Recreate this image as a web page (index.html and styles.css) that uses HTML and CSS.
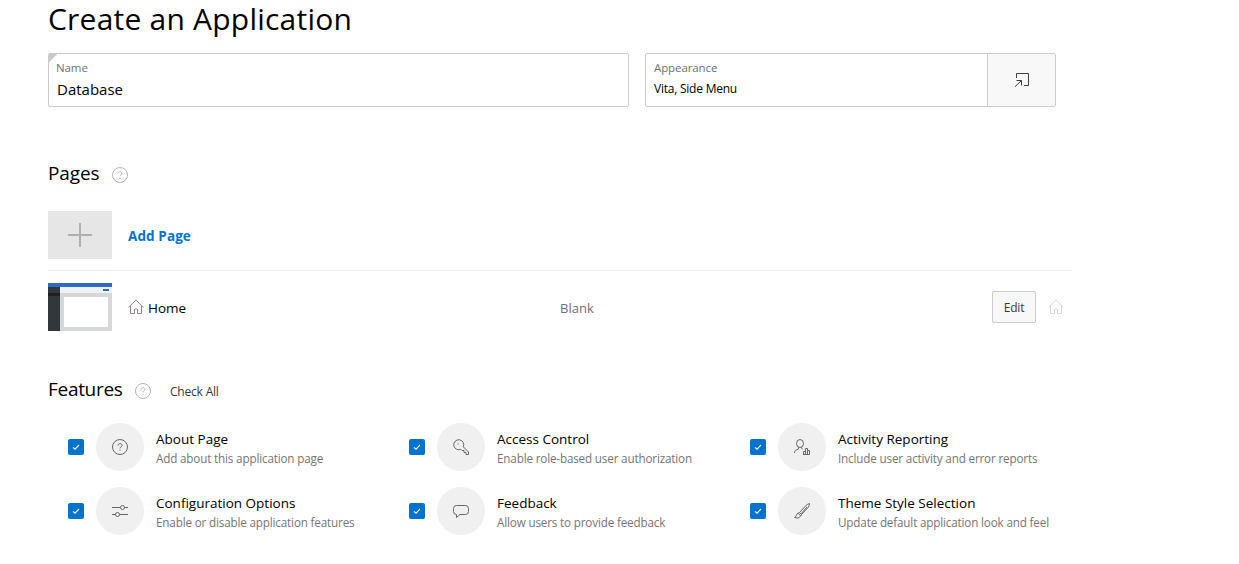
FILE: index.html
```html
<!DOCTYPE html>
<html lang="en">
<head>
<meta charset="utf-8">
<title>Create an Application</title>
<link rel="stylesheet" href="styles.css">
</head>
<body>
<svg class="sprite" aria-hidden="true">
  <symbol id="help" viewBox="0 0 16 16"><circle cx="8" cy="8" r="7.5"/><path d="M6 6.600C6 5.300 6.900 4.600 8 4.600s2 .7 2 1.800C10 7.800 8 7.800 8 9.400M8 10.800v1.100"/></symbol>
  <symbol id="home" viewBox="0 0 16 16"><path d="M.4 8.400 8 1l7.600 7.400M2.500 7v7.500h4V10h3v4.500h4V7"/></symbol>
  <symbol id="check" viewBox="0 0 16 16"><path d="M5 8.300 7 10.200 11 6"/></symbol>
</svg>
<main class="page">
  <h1 class="title">Create an Application</h1>
  <div class="fields">
    <div class="field field-name"><label class="label">Name</label><span class="value">Database</span></div>
    <div class="field field-look">
      <div class="look-text"><label class="label">Appearance</label><span class="value value-small">Vita, Side Menu</span></div>
      <button class="popup"><svg class="icon" viewBox="0 0 16 16"><path d="M2.500 6V1.500h12v12H10M1 14.700 7.500 8.500M2.500 8.500h5v5"/></svg></button>
    </div>
  </div>

  <div class="heading pages-heading"><h2 class="subtitle pages-title">Pages</h2><svg class="icon help"><use href="#help"/></svg></div>
  <div class="row row-add">
    <div class="thumb thumb-add"><svg class="plus" viewBox="0 0 24 24"><path d="M12 0v24M0 12h24"/></svg></div>
    <a class="add">Add Page</a>
  </div>
  <div class="row row-home">
    <svg class="thumb" viewBox="0 0 64 48" shape-rendering="crispEdges">
      <rect width="64" height="48" fill="#d5d8db"/><rect y="4" width="64" height="6" fill="#f0f1f2"/>
      <rect y="4" width="12" height="44" fill="#32373c"/><rect y="10" width="12" height="3" fill="#1c2023"/>
      <rect width="64" height="4" fill="#2e6bc6"/><rect x="55" y="6" width="6" height="2" fill="#2e6bc6"/>
      <rect x="16" y="14" width="44" height="30" fill="#fff"/>
    </svg>
    <div class="home-name"><svg class="icon home"><use href="#home"/></svg><span class="name">Home</span></div>
    <span class="kind">Blank</span>
    <button class="edit">Edit</button>
    <svg class="icon home home-faint"><use href="#home"/></svg>
  </div>

  <div class="heading features-heading"><h2 class="subtitle features-title">Features</h2><svg class="icon help"><use href="#help"/></svg><a class="check-all">Check All</a></div>
  <div class="features">
    <div class="feature"><svg class="box"><use href="#check"/></svg><div class="disc"><svg class="icon"><use href="#help"/></svg></div><div class="text"><span class="name">About Page</span><span class="desc">Add about this application page</span></div></div>
    <div class="feature"><svg class="box"><use href="#check"/></svg><div class="disc"><svg class="icon" viewBox="0 0 16 16"><path d="M10.300 7.800A5 5 0 1 0 7.800 10.300L9 11.500h2v2h2v2h2.500V13zM4.500 5h1.200"/></svg></div><div class="text"><span class="name">Access Control</span><span class="desc">Enable role-based user authorization</span></div></div>
    <div class="feature"><svg class="box"><use href="#check"/></svg><div class="disc"><svg class="icon" viewBox="0 0 16 16"><ellipse cx="6" cy="4.500" rx="3.500" ry="4"/><path d="M4.500 8.300V10L1.500 11.400Q.5 12 .5 14M7.500 8.300v1l1.300.8M9.500 15.500v-3h2v3M11.500 15.500v-6h2v6M13.500 11.500h2v4H9"/></svg></div><div class="text"><span class="name">Activity Reporting</span><span class="desc">Include user activity and error reports</span></div></div>
    <div class="feature"><svg class="box"><use href="#check"/></svg><div class="disc"><svg class="icon" viewBox="0 0 16 16"><path d="M0 4.500h8.500M12.500 4.500H16M0 11.500h3.500M7.500 11.500H16"/><circle cx="10.500" cy="4.500" r="2"/><circle cx="5.500" cy="11.500" r="2"/></svg></div><div class="text"><span class="name">Configuration Options</span><span class="desc">Enable or disable application features</span></div></div>
    <div class="feature"><svg class="box"><use href="#check"/></svg><div class="disc"><svg class="icon" viewBox="0 0 16 16"><path d="M3.500 2.500h9q3 0 3 3v3q0 3-3 3H7L3.500 14.500v-3q-3 0-3-3v-3q0-3 3-3z"/></svg></div><div class="text"><span class="name">Feedback</span><span class="desc">Allow users to provide feedback</span></div></div>
    <div class="feature"><svg class="box"><use href="#check"/></svg><div class="disc"><svg class="icon" viewBox="0 0 16 16"><path d="M15.500.5Q15.500 2.500 14 4.500L7.500 11.500 5.500 9.500 11.500 3Q13.500 1 15.500.5M5.500 9.500 4 10.200 6.800 13 7.500 11.500M4 10.200Q2.500 11 2.300 12.500 2 14 .5 14.500 4.500 16.500 6.800 13M7 10.800 13 4"/></svg></div><div class="text"><span class="name">Theme Style Selection</span><span class="desc">Update default application look and feel</span></div></div>
  </div>
</main>
</body>
</html>
```
FILE: styles.css
```css
* { box-sizing: border-box; }
body { margin: 0; background: #fff; color: #000; font-family: "Open Sans", "Noto Sans", sans-serif; font-size: 13px; overflow: hidden; }
h1, h2 { margin: 0; font-weight: 400; }
button { font: inherit; padding: 0; }
.sprite { position: absolute; width: 0; height: 0; }
.icon { width: 16px; height: 16px; fill: none; stroke: #666; stroke-width: 1; display: block; flex: none; }
.page { width: 1072px; padding-left: 48px; }
.title { font-size: 30px; line-height: 38px; height: 53px; letter-spacing: .22px; white-space: nowrap; }
.fields { display: flex; gap: 16px; height: 54px; }
.field { border: 1px solid #ccc; border-radius: 2px; }
.field-name { width: 581px; padding: 5px 8px 5px 7px; background: linear-gradient(135deg, #ccc 5.600px, transparent 6px); display: flex; flex-direction: column; }
.field-name .value { padding-left: 1px; }
.field-look { width: 411px; display: flex; }
.look-text { flex: 1; padding: 5px 8px; display: flex; flex-direction: column; }
.label { font-size: 11.500px; line-height: 17px; color: #707070; letter-spacing: -.1px; }
.value { font-size: 15px; line-height: 26px; }
.value-small { font-size: 12px; line-height: 25px; letter-spacing: -.23px; }
.popup { width: 68px; border: 0; border-left: 1px solid #ccc; background: #f8f8f8; display: flex; align-items: center; justify-content: center; }
.popup .icon { stroke: #404040; }
.heading { display: flex; align-items: center; }
.subtitle { font-size: 19px; line-height: 28px; white-space: nowrap; letter-spacing: -.3px; }
.pages-title { letter-spacing: -.1px; }
.pages-heading { margin-top: 52px; height: 28px; }
.pages-title { width: 63.500px; }
.features-title { width: 86.500px; }
.help { margin-top: 4px; stroke: #b4b4b4; }
.row { display: flex; align-items: center; }
.row-add { margin-top: 24px; height: 60px; padding-bottom: 12px; border-bottom: 1px solid #ededed; }
.thumb { width: 64px; height: 48px; flex: none; margin-right: 16px; }
.thumb-add { background: #e6e6e6; display: flex; align-items: center; justify-content: center; }
.plus { width: 24px; height: 24px; stroke: #b0b0b0; stroke-width: 2; }
.add { color: #0572ce; font-weight: 700; font-size: 13.500px; letter-spacing: .1px; padding-top: 2px; }
.row-home { margin-top: 12px; height: 48px; }
.home-name { display: flex; gap: 4px; width: 432px; align-items: center; }
.home-name .name { padding-top: 2px; }
.home { stroke: #928792; }
.home-faint { stroke: #ddd4df; margin-left: 12px; }
.kind { width: 432px; color: #707070; padding-top: 2px; }
.edit { width: 44px; height: 32px; border: 1px solid #ccc; border-radius: 2px; background: #f8f8f8; font-size: 12px; color: #383838; letter-spacing: -.2px; }
.features-heading { margin-top: 44px; height: 28px; }
.check-all { margin: 4px 0 0 19.500px; font-size: 12px; color: #383838; letter-spacing: -.2px; }
.features { display: grid; grid-template-columns: repeat(3, 341px); grid-auto-rows: 48px; row-gap: 16px; margin-top: 20px; padding-left: 20px; }
.feature { display: flex; align-items: center; }
.box { width: 16px; height: 16px; flex: none; margin-right: 12px; background: #0572ce; border-radius: 2px; fill: none; stroke: #fff; stroke-width: 1.100; }
.disc { width: 48px; height: 48px; flex: none; border-radius: 50%; background: #f0f0f0; display: flex; align-items: center; justify-content: center; margin-right: 12px; }
.text { display: flex; flex-direction: column; white-space: nowrap; }
.name { font-size: 13.500px; line-height: 20px; }
.desc { font-size: 11.700px; line-height: 16px; color: #767676; letter-spacing: -.17px; position: relative; top: 1px; }
```
